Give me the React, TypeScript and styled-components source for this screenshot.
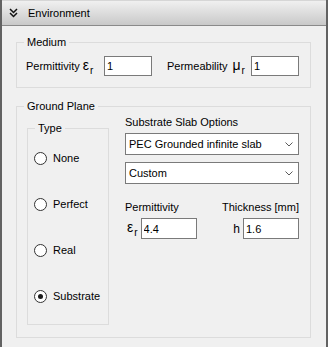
import React from "react"
import styled, { createGlobalStyle } from "styled-components"

const GlobalStyle = createGlobalStyle`
  html, body {
    margin: 0;
    padding: 0;
    background: #f0f0f0;
  }
  body {
    font-family: "Liberation Sans", Arial, sans-serif;
    font-size: 11px;
    color: #000;
  }
`

const Panel = styled.div`
  width: 328px;
  height: 347px;
  box-sizing: border-box;
  border-left: 2px solid #626262;
  border-right: 2px solid #626262;
  background: #f0f0f0;
  display: flex;
  flex-direction: column;
  overflow: hidden;
`

const Header = styled.div`
  height: 26px;
  box-sizing: border-box;
  display: flex;
  align-items: center;
  gap: 10px;
  padding: 0 0 0 7px;
  border-top: 1px solid #d6d6d6;
  border-bottom: 1px solid #8a8a8a;
  background: linear-gradient(#f0f0f0, #c9c9c9);
  font-size: 11px;
  line-height: 13px;
`

const Body = styled.div`
  flex: 1;
  display: flex;
  flex-direction: column;
  gap: 12px;
  padding: 10px 15px 0 14px;
`

const Group = styled.fieldset<{ $pad: string }>`
  margin: 0;
  min-inline-size: 0;
  border: 1px solid #dcdcdc;
  padding: ${(p) => p.$pad};
`

// legend sits inside the fieldset's left padding, so pull it back to 7px from the border
const Legend = styled.legend<{ $inset: number }>`
  margin-left: ${(p) => 7 - p.$inset}px;
  padding: 0 3px;
  line-height: 13px;
`

const Row = styled.div`
  display: flex;
  align-items: center;
  gap: 15px;
  height: 20px;
`

const Field = styled.div<{ $w: number }>`
  display: flex;
  align-items: center;
  width: ${(p) => p.$w}px;
`

const Text = styled.span`
  line-height: 13px;
  white-space: nowrap;
`

const Symbol = styled.span<{ $gap?: number; $size?: number }>`
  display: inline-block;
  margin-left: ${(p) => p.$gap ?? 3}px;
  font-size: ${(p) => p.$size ?? 15}px;
  line-height: 16px;
  white-space: nowrap;

  sub {
    font-size: 10px;
    line-height: 10px;
    vertical-align: -4px;
    margin-left: 1px;
  }
`

const Input = styled.input<{ $w: number; $h?: number }>`
  margin-left: auto;
  box-sizing: border-box;
  width: ${(p) => p.$w}px;
  height: ${(p) => p.$h ?? 20}px;
  border: 1px solid #7a7a7a;
  background: #fff;
  padding: 0 2px;
  font-family: "Liberation Sans", Arial, sans-serif;
  font-size: 11px;
  color: #000;
  outline: none;
`

const Columns = styled.div`
  display: flex;
  gap: 16px;
`

const TypeBox = styled(Group)`
  width: 82px;
  box-sizing: border-box;
  margin-top: 9px;
`

const RadioItem = styled.label`
  height: 46px;
  display: flex;
  align-items: center;
  gap: 6px;
`

const RadioMark = styled.span<{ $on?: boolean }>`
  width: 13px;
  height: 13px;
  box-sizing: border-box;
  border-radius: 50%;
  border: 1px solid #333;
  background: #fff;
  display: flex;
  align-items: center;
  justify-content: center;

  &::after {
    content: "";
    width: 5px;
    height: 5px;
    border-radius: 50%;
    background: ${(p) => (p.$on ? "#1a1a1a" : "transparent")};
  }
`

const Options = styled.div`
  width: 174px;
  display: flex;
  flex-direction: column;
`

const Caption = styled.div<{ $top: number }>`
  margin-top: ${(p) => p.$top}px;
  line-height: 13px;
  white-space: nowrap;
`

const Select = styled.div<{ $top: number }>`
  margin-top: ${(p) => p.$top}px;
  height: 22px;
  box-sizing: border-box;
  border: 1px solid #7a7a7a;
  background: #fff;
  display: flex;
  align-items: center;
  justify-content: space-between;
  padding: 0 5px 0 3px;
  line-height: 13px;
`

const Params = styled.div`
  margin-top: 17px;
  display: flex;
  justify-content: space-between;
`

const Param = styled.div<{ $right?: boolean }>`
  display: flex;
  flex-direction: column;
  align-items: ${(p) => (p.$right ? "flex-end" : "flex-start")};
  gap: 4px;
`

const ParamRow = styled.div`
  display: flex;
  align-items: center;
  gap: 3px;
`

const Chevron = () => (
  <svg width="8" height="5" viewBox="0 0 8 5">
    <path d="M0.5 0.5 L4 4 L7.5 0.5" fill="none" stroke="#5a5a5a" strokeWidth="1" />
  </svg>
)

const DoubleChevron = () => (
  <svg width="9" height="10" viewBox="0 0 9 10">
    <path d="M1 1 L4.5 4.5 L8 1 M1 5 L4.5 8.5 L8 5" fill="none" stroke="#111" strokeWidth="1.5" />
  </svg>
)

const types = ["None", "Perfect", "Real", "Substrate"]

export default function App() {
  return (
    <>
      <GlobalStyle />
      <Panel>
        <Header>
          <DoubleChevron />
          <span>Environment</span>
        </Header>
        <Body>
          <Group $pad="7px 9px 11px">
            <Legend $inset={9}>Medium</Legend>
            <Row>
              <Field $w={126}>
                <Text>Permittivity</Text>
                <Symbol $gap={3} $size={14}>ε<sub>r</sub></Symbol>
                <Input $w={48} defaultValue="1" />
              </Field>
              <Field $w={132}>
                <Text>Permeability</Text>
                <Symbol $gap={5} $size={14}>μ<sub>r</sub></Symbol>
                <Input $w={48} defaultValue="1" />
              </Field>
            </Row>
          </Group>

          <Group $pad="0 11px 12px 10px">
            <Legend $inset={10}>Ground Plane</Legend>
            <Columns>
              <TypeBox $pad="0 0 5px 6px">
                <Legend $inset={6}>Type</Legend>
                {types.map((t) => (
                  <RadioItem key={t}>
                    <RadioMark $on={t === "Substrate"} />
                    <Text>{t}</Text>
                  </RadioItem>
                ))}
              </TypeBox>
              <Options>
                <Caption $top={3}>Substrate Slab Options</Caption>
                <Select $top={4}>
                  <span>PEC Grounded infinite slab</span>
                  <Chevron />
                </Select>
                <Select $top={7}>
                  <span>Custom</span>
                  <Chevron />
                </Select>
                <Params>
                  <Param>
                    <Text>Permittivity</Text>
                    <ParamRow>
                      <Symbol $gap={2} $size={14}>ε<sub>r</sub></Symbol>
                      <Input $w={56} $h={21} defaultValue="4.4" />
                    </ParamRow>
                  </Param>
                  <Param $right>
                    <Text>Thickness [mm]</Text>
                    <ParamRow>
                      <Symbol $size={12}>h</Symbol>
                      <Input $w={56} $h={21} defaultValue="1.6" />
                    </ParamRow>
                  </Param>
                </Params>
              </Options>
            </Columns>
          </Group>
        </Body>
      </Panel>
    </>
  )
}
